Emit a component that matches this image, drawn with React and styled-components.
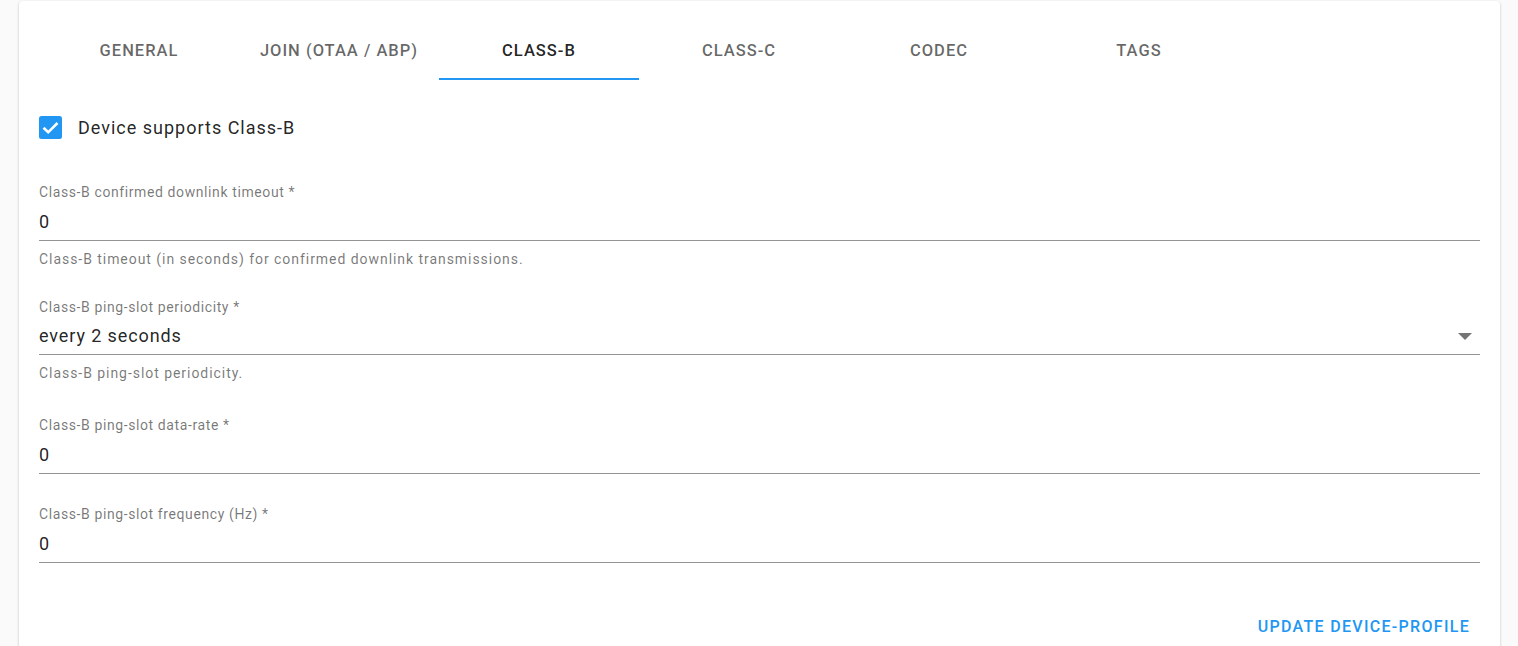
import React from 'react';
import styled, { createGlobalStyle } from 'styled-components';

const GlobalStyle = createGlobalStyle`
  html, body {
    margin: 0;
    padding: 0;
    background: #fafafa;
    font-family: Roboto, "Noto Sans", Arial, sans-serif;
    overflow: hidden;
  }
  * {
    box-sizing: border-box;
  }
`;

const Page = styled.div`
  padding: 1px 18px 0 19px;
  height: 646px;
`;

const Card = styled.div`
  background: #fff;
  border-radius: 4px;
  box-shadow: 0 1px 3px rgba(0, 0, 0, 0.2), 0 1px 1px rgba(0, 0, 0, 0.14),
    0 2px 1px -1px rgba(0, 0, 0, 0.12);
  padding: 0 20px 40px;
  min-height: 700px;
`;

const TabBar = styled.div`
  display: flex;
`;

const Tab = styled.div`
  position: relative;
  width: 200px;
  height: 79px;
  padding-top: 41px;
  text-align: center;
  font-size: 16.5px;
  font-weight: 500;
  line-height: 18px;
  letter-spacing: 1px;
  text-transform: uppercase;
  color: ${(p) => (p.$active ? 'rgba(0, 0, 0, 0.87)' : 'rgba(0, 0, 0, 0.6)')};
`;

const Indicator = styled.span`
  position: absolute;
  left: 0;
  right: 0;
  bottom: 0;
  height: 2px;
  background: #2196f3;
`;

const CheckRow = styled.label`
  display: flex;
  align-items: center;
  gap: 16px;
  height: 48px;
  margin-top: 23px;
  font-size: 18px;
  letter-spacing: 1px;
  color: rgba(0, 0, 0, 0.87);
`;

const Field = styled.div`
  margin-top: ${(p) => p.$gap || 32}px;
`;

const Label = styled.div`
  font-size: 14px;
  line-height: 16px;
  letter-spacing: 0.6px;
  color: rgba(0, 0, 0, 0.54);
`;

const InputRow = styled.div`
  display: flex;
  align-items: center;
  justify-content: space-between;
  padding: ${(p) => (p.$select ? '9px 0 6px' : '10px 0 6px')};
  line-height: 24px;
  font-size: 18px;
  letter-spacing: 0.9px;
  color: rgba(0, 0, 0, 0.87);
  border-bottom: 1px solid rgba(0, 0, 0, 0.42);
`;

const Helper = styled.div`
  margin-top: 10px;
  font-size: 14px;
  line-height: 16px;
  letter-spacing: 0.95px;
  color: rgba(0, 0, 0, 0.54);
`;

const Actions = styled.div`
  display: flex;
  justify-content: flex-end;
  margin-top: 45px;
`;

const TextButton = styled.button`
  background: none;
  border: none;
  padding: 0 10px;
  height: 36px;
  font-family: inherit;
  font-size: 16px;
  font-weight: 500;
  letter-spacing: 1.3px;
  color: #2196f3;
  text-transform: uppercase;
  cursor: pointer;
`;

const DropArrow = styled.svg`
  margin-right: 8px;
`;

const CheckIcon = () => (
  <svg width="23" height="23" viewBox="0 0 23 23">
    <rect x="0" y="0" width="23" height="23" rx="2.5" fill="#2196f3" />
    <path d="M4.5 11.8 L9.2 16.3 L18.5 7" fill="none" stroke="#fff" strokeWidth="2.6" />
  </svg>
);

const ArrowDown = () => (
  <DropArrow width="14" height="7" viewBox="0 0 14 7">
    <path d="M0 0 L14 0 L7 7 Z" fill="rgba(0,0,0,0.54)" />
  </DropArrow>
);

const tabs = ['General', 'Join (OTAA / ABP)', 'Class-B', 'Class-C', 'Codec', 'Tags'];

const fields = [
  {
    label: 'Class-B confirmed downlink timeout *',
    value: '0',
    helper: 'Class-B timeout (in seconds) for confirmed downlink transmissions.',
    gap: 33,
  },
  {
    label: 'Class-B ping-slot periodicity *',
    value: 'every 2 seconds',
    helper: 'Class-B ping-slot periodicity.',
    select: true,
  },
  { label: 'Class-B ping-slot data-rate *', value: '0', gap: 36 },
  { label: 'Class-B ping-slot frequency (Hz) *', value: '0', gap: 32 },
];

export default function App() {
  return (
    <>
      <GlobalStyle />
      <Page>
        <Card>
          <TabBar>
            {tabs.map((t) => (
              <Tab key={t} $active={t === 'Class-B'}>
                {t}
                {t === 'Class-B' && <Indicator />}
              </Tab>
            ))}
          </TabBar>

          <CheckRow>
            <CheckIcon />
            Device supports Class-B
          </CheckRow>

          {fields.map((f) => (
            <Field key={f.label} $gap={f.gap}>
              <Label>{f.label}</Label>
              <InputRow $select={f.select}>
                <span>{f.value}</span>
                {f.select && <ArrowDown />}
              </InputRow>
              {f.helper && <Helper>{f.helper}</Helper>}
            </Field>
          ))}

          <Actions>
            <TextButton>Update device-profile</TextButton>
          </Actions>
        </Card>
      </Page>
    </>
  );
}
